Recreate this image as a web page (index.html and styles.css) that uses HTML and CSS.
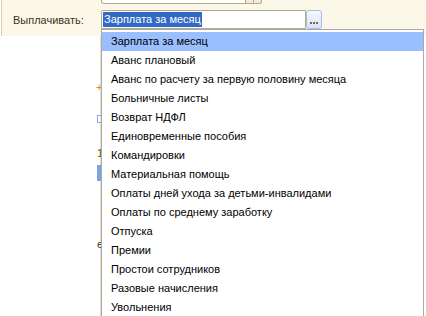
FILE: index.html
```html
<!doctype html>
<html>
<head>
	<meta charset="utf-8">
	<title>Выплачивать</title>
	<link rel="stylesheet" href="styles.css">
</head>
<body>
	<div class="page">
		<div class="panel">
			<div class="prev-field">
				<span class="prev-input"></span>
				<span class="prev-btn"></span>
				<span class="prev-btn"></span>
			</div>
			<div class="row">
				<label class="caption" for="pay">Выплачивать:</label>
				<div class="combo">
					<div class="combo-input" id="pay"><span class="sel">Зарплата за месяц</span></div>
					<span class="combo-btn"><i></i><i></i><i></i></span>
				</div>
			</div>
		</div>
		<div class="under">
			<span class="mark plus">+</span>
			<span class="mark box"></span>
			<span class="mark one">1</span>
			<span class="mark bar"></span>
			<span class="mark letter">е</span>
		</div>

		<ul class="dropdown">
			<li class="active">Зарплата за месяц</li>
			<li>Аванс плановый</li>
			<li>Аванс по расчету за первую половину месяца</li>
			<li>Больничные листы</li>
			<li>Возврат НДФЛ</li>
			<li>Единовременные пособия</li>
			<li>Командировки</li>
			<li>Материальная помощь</li>
			<li>Оплаты дней ухода за детьми-инвалидами</li>
			<li>Оплаты по среднему заработку</li>
			<li>Отпуска</li>
			<li>Премии</li>
			<li>Простои сотрудников</li>
			<li>Разовые начисления</li>
			<li>Увольнения</li>
		</ul>
	</div>
</body>
</html>
```

FILE: styles.css
```css
*{
	margin:0;
	padding:0;
	box-sizing:border-box;
}
html,body{
	width:426px;
	height:316px;
	overflow:hidden;
	background:#fff;
}
body{
	font-family:"Liberation Sans", Arial, sans-serif;
	font-size:11px;
	color:#000;
}
.page{
	position:relative;
	height:316px;
}

/* верхняя панель формы */
.panel{
	height:36px;
	margin-left:1px;
	border-left:1px solid #d6cfb2;
	background:#fbf8e9;
}
.prev-field{
	display:flex;
	height:4px;
	margin-left:99px;
}
.prev-input{
	width:145px;
	background:#fff;
	border:1px solid #b5ab8c;
	border-top:none;
	border-radius:0 0 0 3px;
}
.prev-btn{
	width:8px;
	background:#f1ecd8;
	border:1px solid #b5ab8c;
	border-top:none;
	border-left:none;
}
.prev-btn:last-child{
	border-radius:0 0 3px 0;
}
.row{
	display:flex;
	align-items:center;
	margin-top:6px;
}
.caption{
	width:99px;
	padding-left:11px;
	color:#3b3320;
}
.combo{
	display:flex;
}
.combo-input{
	width:205px;
	height:19px;
	padding:1px 0 0 1px;
	background:#fff;
	border:1px solid #b5ab8c;
	border-radius:2px 0 0 0;
}
.sel{
	display:inline-block;
	height:15px;
	line-height:15px;
	padding:0 1px;
	background:#316ac5;
	color:#fff;
}
.combo-btn{
	display:flex;
	align-items:flex-end;
	justify-content:center;
	gap:1px;
	width:16px;
	height:19px;
	padding-bottom:4px;
	border:1px solid #a8bde2;
	border-radius:3px;
	background:linear-gradient(#f4f8ff, #d6e3f8);
}
.combo-btn i{
	width:2px;
	height:2px;
	background:#7b6a2c;
}

/* остатки формы под списком */
.under{
	height:280px;
	margin-left:100px;
	border-left:1px solid #e6e0c8;
}
.mark{
	position:absolute;
	font-size:11px;
}
.plus{ left:96px; top:81px; color:#e08a1e; }
.box{ left:97px; top:115px; width:5px; height:8px; border:1px solid #8fa9d8; }
.one{ left:97px; top:147px; color:#6b5a14; }
.bar{ left:97px; top:165px; width:5px; height:16px; background:#7fa3e0; }
.letter{ left:97px; top:238px; color:#333; }

/* выпадающий список */
.dropdown{
	position:absolute;
	left:101px;
	top:29px;
	width:323px;
	height:300px;
	padding-top:2px;
	list-style:none;
	background:#fff;
	border:1px solid #a9a9a9;
	overflow:hidden;
}
.dropdown li{
	height:19px;
	line-height:19px;
	padding-left:9px;
	white-space:nowrap;
}
.dropdown li.active{
	background:#99bfff;
}
```
